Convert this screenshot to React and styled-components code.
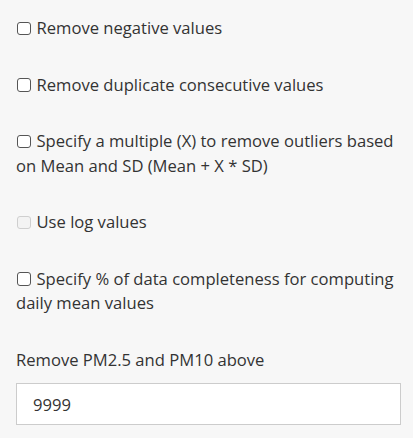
import React from "react";
import styled, { createGlobalStyle } from "styled-components";

const Global = createGlobalStyle`
  html, body { margin: 0; padding: 0; background: #f7f7f7; }
  body { font-family: "Open Sans", "Noto Sans", sans-serif; color: #333; }
`;

const Panel = styled.div`
  width: 413px;
  box-sizing: border-box;
  padding: 16px 13px 0 16px;
  display: flex;
  flex-direction: column;
`;

const Option = styled.label`
  display: block;
  font-size: 16.6px;
  line-height: 24.5px;
  margin-bottom: 32px;
  color: #333;
`;

const Box = styled.input.attrs({ type: "checkbox" })`
  appearance: none;
  -webkit-appearance: none;
  box-sizing: border-box;
  width: 13.5px;
  height: 13.5px;
  margin: 0 6px 0 1px;
  vertical-align: -1px;
  border: 1px solid #555;
  border-radius: 3px;
  background: #fff;

  &:disabled {
    border-color: #cfcfcf;
    background: #f3f3f3;
  }
`;

const FieldLabel = styled.div`
  font-size: 16.6px;
  line-height: 24.5px;
  margin-bottom: 11px;
`;

const TextInput = styled.input`
  box-sizing: border-box;
  width: 385px;
  height: 42px;
  border: 1px solid #ccc;
  background: #fff;
  padding: 0 16px;
  font-family: inherit;
  font-size: 16.6px;
  color: #333;
  outline: none;
`;

export default function App() {
  return (
    <>
      <Global />
      <Panel>
        <Option><Box />Remove negative values</Option>
        <Option><Box />Remove duplicate consecutive values</Option>
        <Option><Box />Specify a multiple (X) to remove outliers based on Mean and SD (Mean + X * SD)</Option>
        <Option><Box disabled />Use log values</Option>
        <Option><Box />Specify % of data completeness for computing daily mean values</Option>
        <FieldLabel>Remove PM2.5 and PM10 above</FieldLabel>
        <TextInput defaultValue="9999" />
      </Panel>
    </>
  );
}
